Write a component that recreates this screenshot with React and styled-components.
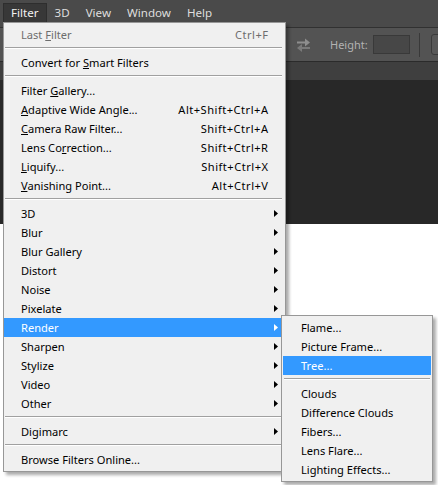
import React from "react";
import styled, { createGlobalStyle } from "styled-components";

const GlobalStyle = createGlobalStyle`
  html, body { margin: 0; padding: 0; background: #ffffff; }
  body { font-family: "Noto Sans", "Open Sans", sans-serif; overflow: hidden; }
  * { box-sizing: border-box; }
`;

const Page = styled.div`
  position: relative;
  width: 438px;
  height: 485px;
  overflow: hidden;
  background: #ffffff;
  display: flex;
  flex-direction: column;
`;

const MenuBar = styled.div`
  height: 27px;
  flex: none;
  background: #4a4a4a;
  display: flex;
  align-items: flex-start;
  padding: 3px 0 0 3px;
`;

const MenuTitle = styled.div`
  height: 19px;
  line-height: 18px;
  padding: 0 7px 0 7px;
  font-size: 11.6px;
  color: ${(p) => (p.$open ? "#f2f2f2" : "#dedede")};
  background: ${(p) => (p.$open ? "#383838" : "transparent")};
  border: 1px solid ${(p) => (p.$open ? "#2e2e2e" : "transparent")};
  border-bottom: none;
  white-space: nowrap;
`;

const OptionsBar = styled.div`
  height: 35px;
  flex: none;
  background: #535353;
  border-top: 1px solid #313131;
  border-bottom: 1px solid #2b2b2b;
  display: flex;
  align-items: center;
  padding-left: 296px;
`;

const SwapIcon = styled.svg`
  width: 15px;
  height: 14px;
  flex: none;
`;

const FieldLabel = styled.span`
  margin-left: 19px;
  font-size: 11px;
  color: #b2b2b2;
  white-space: nowrap;
`;

const FieldInput = styled.div`
  margin-left: 5px;
  width: 37px;
  height: 19px;
  flex: none;
  background: #474747;
  border: 1px solid #393939;
`;

const BarDivider = styled.div`
  margin-left: 9px;
  width: 1px;
  height: 24px;
  flex: none;
  background: #393939;
`;

const BarButton = styled.div`
  margin-left: 11px;
  width: 30px;
  height: 21px;
  flex: none;
  border: 1px solid #3a3a3a;
  border-radius: 3px;
  background: #585858;
`;

const TabStrip = styled.div`
  height: 18px;
  flex: none;
  background: #3f3f3f;
`;

const DarkCanvas = styled.div`
  height: 144px;
  flex: none;
  background: #282828;
`;

const WhiteArea = styled.div`
  flex: 1;
  background: #ffffff;
`;

const MenuPanel = styled.div`
  position: absolute;
  left: ${(p) => p.$left}px;
  top: ${(p) => p.$top}px;
  width: ${(p) => p.$width}px;
  background: #f0f0f0;
  border: 1px solid #979797;
  padding: 2px 0;
  box-shadow: 3px 3px 3px rgba(0, 0, 0, 0.33);
  font-size: 11.1px;
  color: #000000;
`;

const Item = styled.div`
  height: 19px;
  line-height: 19px;
  margin: ${(p) => (p.$sub ? "0 1px" : "0 3px 0 0")};
  padding-left: ${(p) => (p.$sub ? 18 : 17)}px;
  display: grid;
  grid-template-columns: 1fr auto ${(p) => (p.$sub ? "0px" : "14px")};
  align-items: center;
  white-space: nowrap;
  background: ${(p) => (p.$active ? "#3399ff" : "transparent")};
  color: ${(p) => (p.$active ? "#ffffff" : p.$disabled ? "#6d6d6d" : "#000000")};

  u {
    text-decoration: underline;
    text-underline-offset: 1px;
    text-decoration-thickness: 1px;
  }
`;

const Shortcut = styled.span`
  letter-spacing: 0.5px;
  margin-right: -0.5px;
`;

const ArrowCell = styled.span`
  display: flex;
  align-items: center;
  padding-left: 6px;
  height: 19px;
`;

const Separator = styled.div`
  height: 0;
  margin: ${(p) => (p.$sub ? "3px 2px 4px 2px" : "3px 3px 4px 1px")};
  border-top: 1px solid #a0a0a0;
  border-bottom: 1px solid #ffffff;
`;

const SubArrow = ({ color }) => (
  <svg width="4" height="7" viewBox="0 0 4 7">
    <polygon points="0,0 4,3.5 0,7" fill={color} />
  </svg>
);

const Label = ({ text, mn }) => {
  if (mn === undefined) return <span>{text}</span>;
  return (
    <span>
      {text.slice(0, mn)}
      <u>{text[mn]}</u>
      {text.slice(mn + 1)}
    </span>
  );
};

const SEP = { sep: true };

const mainItems = [
  { text: "Last Filter", mn: 5, shortcut: "Ctrl+F", disabled: true },
  SEP,
  { text: "Convert for Smart Filters", mn: 12 },
  SEP,
  { text: "Filter Gallery...", mn: 7 },
  { text: "Adaptive Wide Angle...", mn: 0, shortcut: "Alt+Shift+Ctrl+A" },
  { text: "Camera Raw Filter...", mn: 0, shortcut: "Shift+Ctrl+A" },
  { text: "Lens Correction...", mn: 7, shortcut: "Shift+Ctrl+R" },
  { text: "Liquify...", mn: 0, shortcut: "Shift+Ctrl+X" },
  { text: "Vanishing Point...", mn: 0, shortcut: "Alt+Ctrl+V" },
  SEP,
  { text: "3D", sub: true },
  { text: "Blur", sub: true },
  { text: "Blur Gallery", sub: true },
  { text: "Distort", sub: true },
  { text: "Noise", sub: true },
  { text: "Pixelate", sub: true },
  { text: "Render", sub: true, active: true },
  { text: "Sharpen", sub: true },
  { text: "Stylize", sub: true },
  { text: "Video", sub: true },
  { text: "Other", sub: true },
  SEP,
  { text: "Digimarc", sub: true },
  SEP,
  { text: "Browse Filters Online..." },
];

const renderItems = [
  { text: "Flame..." },
  { text: "Picture Frame..." },
  { text: "Tree...", active: true },
  SEP,
  { text: "Clouds" },
  { text: "Difference Clouds" },
  { text: "Fibers..." },
  { text: "Lens Flare..." },
  { text: "Lighting Effects..." },
];

const titles = ["Filter", "3D", "View", "Window", "Help"];

function MenuList({ items, isSub }) {
  return items.map((it, i) =>
    it.sep ? (
      <Separator key={i} $sub={isSub} />
    ) : (
      <Item key={i} $sub={isSub} $active={it.active} $disabled={it.disabled}>
        <Label text={it.text} mn={it.mn} />
        <Shortcut>{it.shortcut || ""}</Shortcut>
        {!isSub && (
          <ArrowCell>{it.sub && <SubArrow color={it.active ? "#ffffff" : "#000000"} />}</ArrowCell>
        )}
      </Item>
    )
  );
}

export default function App() {
  return (
    <>
      <GlobalStyle />
      <Page>
        <MenuBar>
          {titles.map((t, i) => (
            <MenuTitle key={t} $open={i === 0}>
              {t}
            </MenuTitle>
          ))}
        </MenuBar>
        <OptionsBar>
          <SwapIcon viewBox="0 0 15 14">
            <path d="M1 4.5 H10" stroke="#8e8e8e" strokeWidth="2" />
            <polygon points="9,0.5 14,4.5 9,8.5" fill="#8e8e8e" />
            <path d="M5 10 H14" stroke="#7a7a7a" strokeWidth="2" />
            <polygon points="6,6 1,10 6,14" fill="#7a7a7a" />
          </SwapIcon>
          <FieldLabel>Height:</FieldLabel>
          <FieldInput />
          <BarDivider />
          <BarButton />
        </OptionsBar>
        <TabStrip />
        <DarkCanvas />
        <WhiteArea />

        <MenuPanel $left={3} $top={22} $width={283}>
          <MenuList items={mainItems} />
        </MenuPanel>
        <MenuPanel $left={281} $top={315} $width={152}>
          <MenuList items={renderItems} isSub />
        </MenuPanel>
      </Page>
    </>
  );
}
